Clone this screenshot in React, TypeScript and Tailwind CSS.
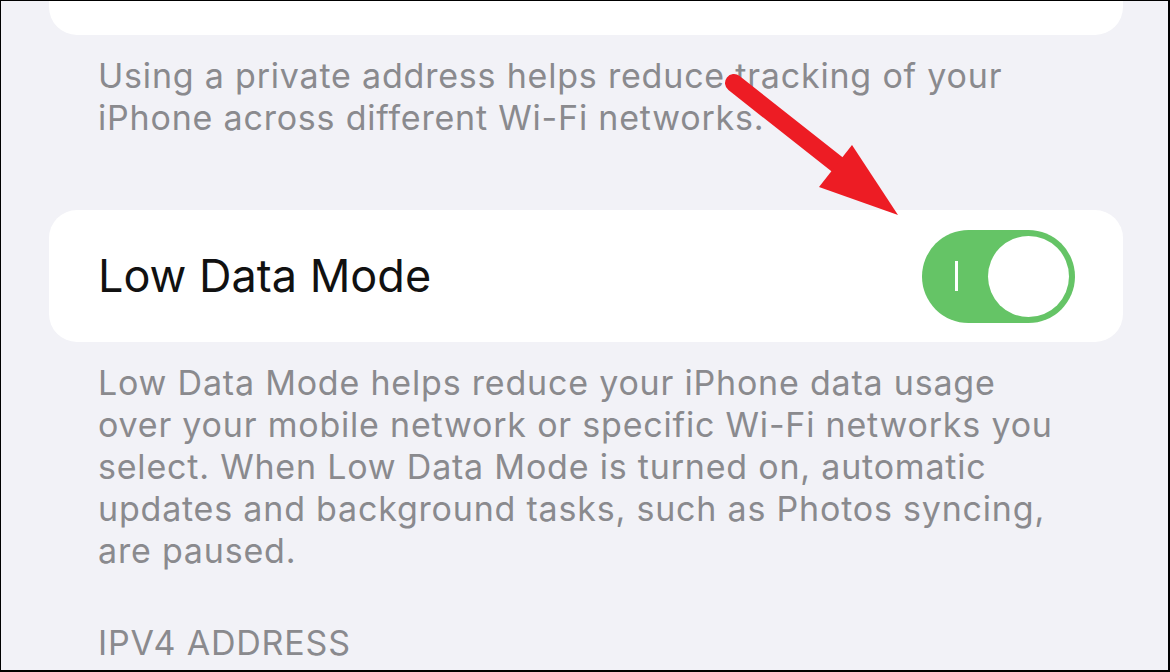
import React from 'react';

const font = { fontFamily: 'Inter, "Noto Sans", sans-serif' };

function Toggle() {
  return (
    <div className="relative flex h-[93px] w-[153px] items-center rounded-full bg-[#65c466]">
      <div className="ml-[33px] h-[30px] w-[3px] bg-white" />
      <div className="absolute right-[6px] top-[6px] h-[81px] w-[81px] rounded-full bg-white" />
    </div>
  );
}

function Arrow() {
  return (
    <svg
      className="pointer-events-none absolute left-0 top-0"
      width="1170"
      height="672"
      viewBox="0 0 1170 672"
    >
      <line x1="733" y1="82" x2="842" y2="168" stroke="#ed1c24" strokeWidth="18" strokeLinecap="round" />
      <polygon points="851,144 897,214 818,186" fill="#ed1c24" />
    </svg>
  );
}

export default function App() {
  return (
    <div
      className="relative h-[672px] w-[1170px] overflow-hidden border-t border-l border-r-2 border-b-2 border-black bg-[#f2f2f7]"
      style={font}
    >
      <div className="pl-[48px] pr-[45px]">
        {/* ─── Private address card (cut off) ─── */}
        <div className="h-[34px] rounded-b-[28px] bg-white" />

        <p className="mt-[20px] pl-[49px] pr-[20px] text-[34px] leading-[42px] tracking-[0.8px] text-[#8a8a8e]">
          Using a private address helps reduce tracking of your
          <br />
          iPhone across different Wi-Fi networks.
        </p>

        {/* ─── Low Data Mode row ─── */}
        <div className="mt-[71px] flex h-[132px] items-center justify-between rounded-[28px] bg-white pl-[49px] pr-[48px]">
          <span className="text-[45px] text-[#111]">Low Data Mode</span>
          <Toggle />
        </div>

        <p className="mt-[20px] pl-[49px] pr-[20px] text-[34px] leading-[42px] tracking-[0.8px] text-[#8a8a8e]">
          Low Data Mode helps reduce your iPhone data usage
          <br />
          over your mobile network or specific Wi-Fi networks you
          <br />
          select. When Low Data Mode is turned on, automatic
          <br />
          updates and background tasks, such as Photos syncing,
          <br />
          are paused.
        </p>

        <p className="mt-[50px] pl-[49px] text-[34px] leading-[42px] tracking-[0.8px] text-[#8a8a8e]">IPV4 ADDRESS</p>
      </div>
      <Arrow />
    </div>
  );
}
